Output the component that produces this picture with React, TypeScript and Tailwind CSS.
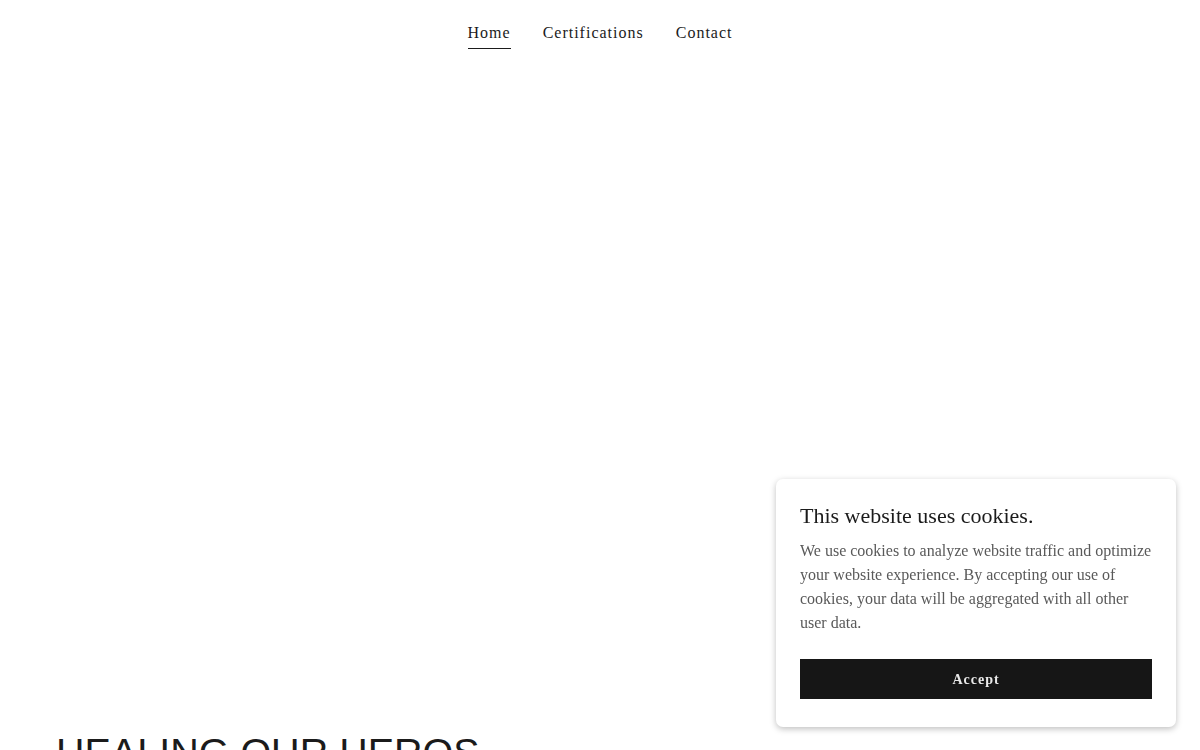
export default function App() {
  const links = ['Home', 'Certifications', 'Contact'];

  return (
    <div className="min-h-screen bg-white font-['Liberation_Serif',serif] text-[#1b1b1b]">
      <header className="pt-[21px]">
        <nav className="flex justify-center gap-8">
          {links.map((label, i) => (
            <a
              key={label}
              href="#"
              className={
                'pb-[3px] text-[16px] leading-6 tracking-[1px] text-[#1b1b1b] ' +
                (i === 0 ? 'border-b border-[#1b1b1b]' : 'border-b border-transparent')
              }
            >
              {label}
            </a>
          ))}
        </nav>
      </header>

      <section className="h-[679px]" />

      <section className="px-[56px]">
        <h1 className="font-['Liberation_Sans',Arial,sans-serif] text-[39.5px] leading-[48px] text-[#1b1b1b]">
          HEALING OUR HEROS
        </h1>
        <div className="h-[300px]" />
      </section>

      <div className="fixed right-6 bottom-[23px] w-[400px] rounded-[7px] bg-white px-6 pt-[23px] pb-[28px] shadow-[0_2px_6px_rgba(0,0,0,0.25)]">
        <h2 className="text-[22px] leading-[27px] text-[#1b1b1b]">This website uses cookies.</h2>
        <p className="mt-[10px] text-[16px] leading-6 text-[#595959]">
          We use cookies to analyze website traffic and optimize your website experience. By accepting our use of
          cookies, your data will be aggregated with all other user data.
        </p>
        <button className="mt-6 flex h-10 w-full items-center justify-center bg-[#161616] text-[14px] font-bold tracking-[1px] text-[#e8e8e8]">
          Accept
        </button>
      </div>
    </div>
  );
}
